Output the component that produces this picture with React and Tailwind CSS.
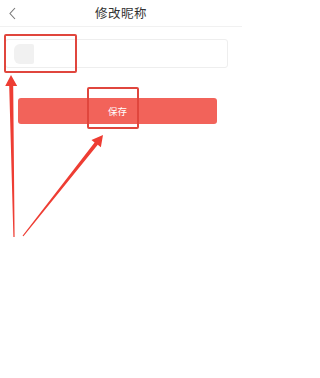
import React from 'react'

function arrowPoints(x1, y1, x2, y2) {
	const len = Math.hypot(x2 - x1, y2 - y1)
	const dx = (x2 - x1) / len
	const dy = (y2 - y1) / len
	const nx = -dy
	const ny = dx
	const headLen = 11
	const bx = x2 - dx * headLen
	const by = y2 - dy * headLen
	const pts = [
		[x1 + nx * 0.6, y1 + ny * 0.6],
		[bx + nx * 2, by + ny * 2],
		[bx + nx * 6, by + ny * 6],
		[x2, y2],
		[bx - nx * 6, by - ny * 6],
		[bx - nx * 2, by - ny * 2],
		[x1 - nx * 0.6, y1 - ny * 0.6],
	]
	return pts.map(p => p.join(',')).join(' ')
}

export default function App() {
	return (
		<div className="relative w-[242px] h-[378px] bg-white overflow-hidden" style={{ fontFamily: '"Noto Sans CJK SC", "Liberation Sans", sans-serif' }}>
			<div className="relative h-[27px] flex items-center justify-center border-b border-[#f1f1f1]">
				<svg className="absolute left-[8px] top-[7px]" width="9" height="13" viewBox="0 0 9 13">
					<path d="M7 1 L2 6.5 L7 12" fill="none" stroke="#777" strokeWidth="1.1" />
				</svg>
				<span className="text-[12.5px] text-[#333] tracking-[0.5px]">修改昵称</span>
			</div>

			<div className="ml-[5px] mt-[12px] w-[223px] h-[29px] border border-[#eeeeee] rounded-[3px] flex items-center pl-[8px]">
				<div className="w-[20px] h-[20px] bg-[#f1f1f1] rounded-l-[6px] rounded-r-[2px]" />
			</div>

			<div className="ml-[18px] mt-[30px] w-[199px] h-[26px] bg-[#f2635a] rounded-[3px] flex items-center justify-center">
				<span className="text-[9.5px] text-white">保存</span>
			</div>

			<div className="absolute left-[4px] top-[34px] w-[73px] h-[39px] border-2 border-[#e0463d] rounded-[2px]" />
			<div className="absolute left-[87px] top-[87px] w-[52px] h-[42px] border-2 border-[#e0463d] rounded-[2px]" />

			<svg className="absolute left-0 top-0" width="242" height="378">
				<polygon points={arrowPoints(14, 237, 11, 75)} fill="#ee3d33" />
				<polygon points={arrowPoints(23, 236, 103, 135)} fill="#ee3d33" />
			</svg>
		</div>
	)
}
